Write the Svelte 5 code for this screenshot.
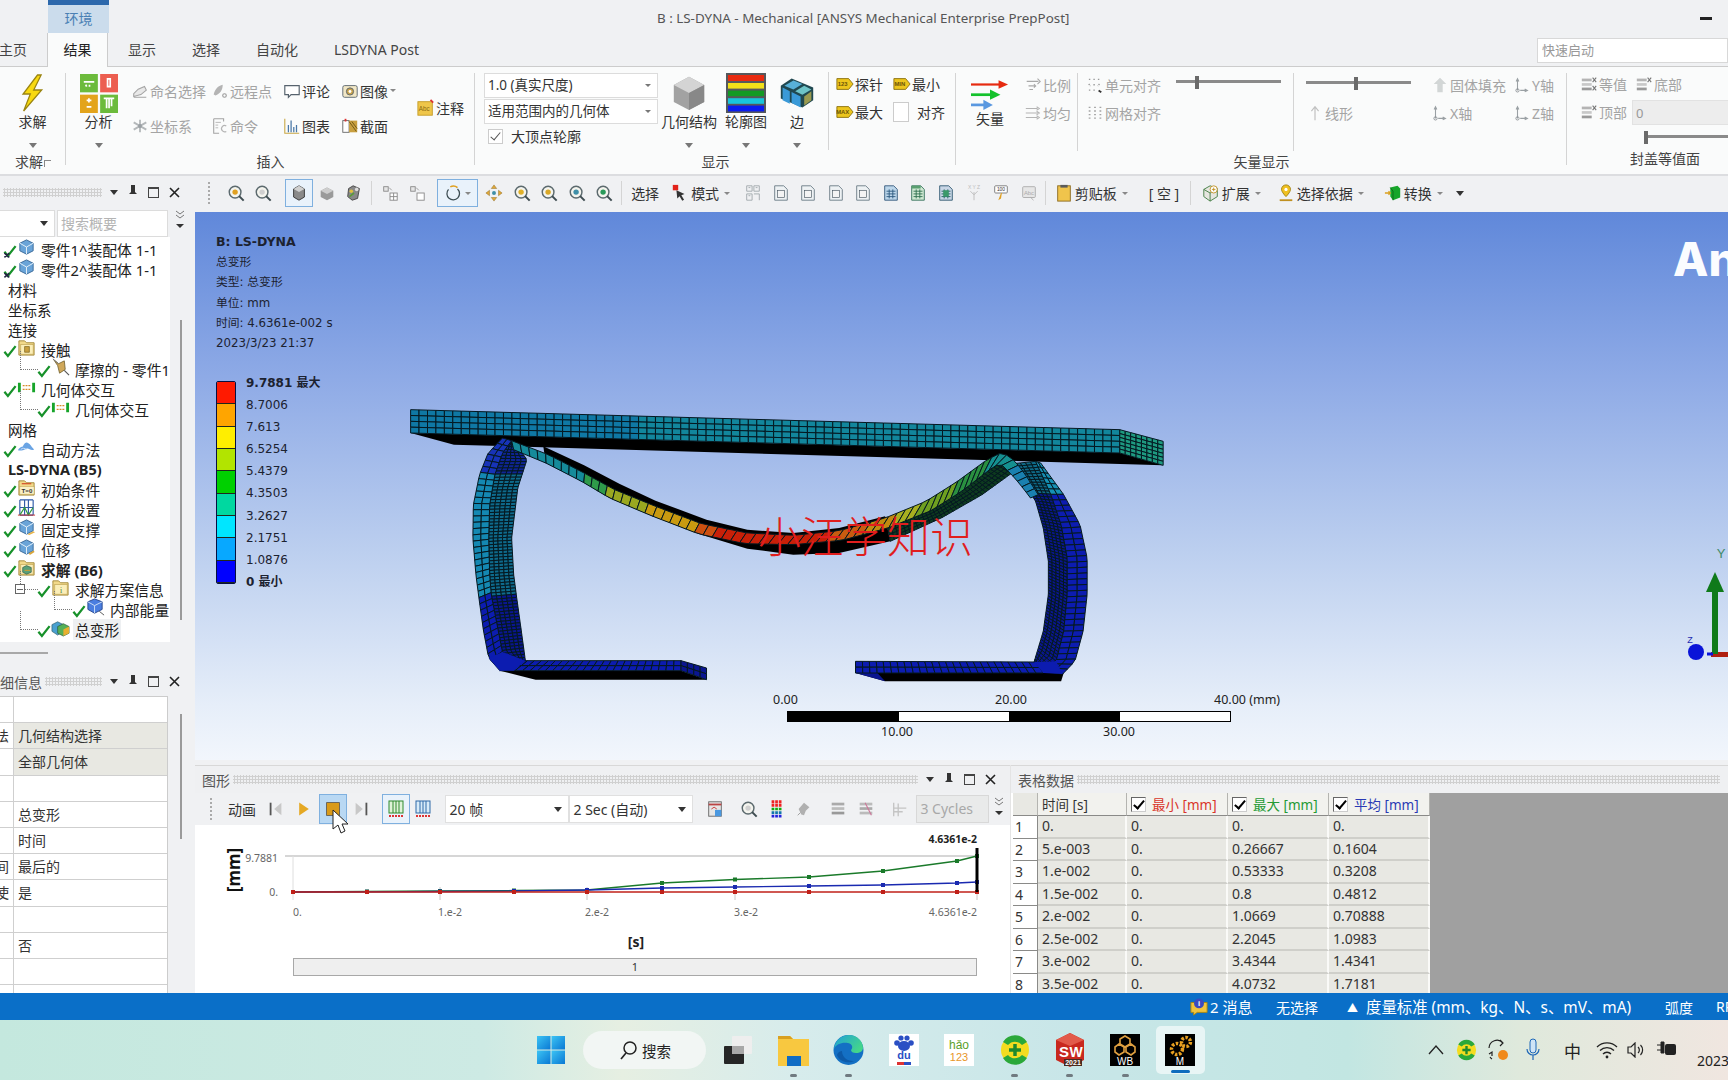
<script>
	const mag = (c) =>
		`<circle cx="9" cy="9" r="6.5" fill="#f4f4ee" stroke="#5c6a6e" stroke-width="1.6"/><circle cx="9" cy="9" r="3" fill="${c}"/><path d="M13.5 13.5l5 5" stroke="#3e4c50" stroke-width="2.2"/>`;
	const sheet = (c) =>
		`<path d="M3 2h10l4 4v12H3z" fill="#eef2f4" stroke="#6a7a84"/><rect x="6" y="7" width="8" height="8" fill="${c}" stroke="#44525c" stroke-width=".7"/>`;
	const folder = (inner) =>
		`<path d="M2 6V3h6l2 2h8v13H2z" fill="#f2d98a" stroke="#a58a3a"/><rect x="4" y="7" width="13" height="10" fill="#fbeeb8" stroke="#b79c4a" stroke-width=".6"/>${inner}`;
	const cubeBlue = `<path d="M10 2l7 3.5v8L10 17l-7-3.5v-8z" fill="#6aa4d8" stroke="#3a6a9a"/><path d="M10 9.5v7.5M3 5.5l7 4 7-4" fill="none" stroke="#e8f2fa"/>`;
	const ax = () =>
		`<path d="M5 16V4M3.5 6L5 3l1.5 3M8 16h8M13 14.5l3 1.5-3 1.5" fill="none" stroke="#9aa0a4" stroke-width="1.2"/><circle cx="5" cy="16" r="1.8" fill="none" stroke="#8a9094"/>`;
	const cap = (t) =>
		`<rect x="2" y="4" width="11" height="3" fill="#b4b4b4"/><rect x="2" y="9" width="11" height="3" fill="#c8c8c8"/><rect x="2" y="14" width="11" height="3" fill="#9a9a9a"/><path d="M14 3l4 5M18 3l-4 5${t ? 'M14 12l4 5M18 12l-4 5' : ''}" stroke="#777" stroke-width="1.2"/>`;
	const tag = (c, t) =>
		`<path d="M1 4h13l5 6-5 6H1z" fill="${c}" stroke="#8a7010"/><text x="7.5" y="12.5" font-size="6.5" text-anchor="middle" font-family="Liberation Sans" fill="#6a5408" font-weight="700">${t}</text>`;

	const icons = {
		bolt: `<path d="M12.5 1L4.5 10.5h4L4.8 19l10-10.5h-4.4L14.5 1z" fill="#f8d910" stroke="#9a8410" stroke-width=".7"/>`,
		analysis: `<rect x="0" y="0" width="9.4" height="9.4" fill="#6cbb3c"/><rect x="10.6" y="0" width="9.4" height="9.4" fill="#ec5e50"/><rect x="0" y="10.6" width="9.4" height="9.4" fill="#e3a41c"/><rect x="10.6" y="10.6" width="9.4" height="9.4" fill="#6cbb3c"/><path d="M2 4h5.5M3 5.5l.5 1M5 5.5v1M14.5 2.5h1.4v4h-1.4zM3.5 13.5h2.5M4.7 12.4v2.2M3.5 16.8h2.5M12.5 12.5h5.5M14 12.5v5M15.3 12.5v5M16.6 12.5v4" stroke="#fff" stroke-width=".9" fill="none"/>`,
		named: `<path d="M3 16v-3l5-5 7-3 2 4-6 5zM3 17h14" fill="#e8e8e8" stroke="#a4a4a4" stroke-width="1.2"/>`,
		remote: `<path d="M3 14C4 8 8 4 13 3c0 6-3 10-8 12z" fill="#b4b4b4"/><circle cx="15" cy="15" r="2" fill="none" stroke="#999" stroke-width="1.2"/>`,
		comment: `<path d="M2 4h16v10H9l-3 3v-3H2z" fill="#fff" stroke="#57636e" stroke-width="1.3"/><path d="M5 9h.01M8 9h.01M11 9h.01" stroke="#57636e"/>`,
		image: `<rect x="2" y="4" width="16" height="13" rx="2" fill="#f1e7c6" stroke="#57636e"/><circle cx="10" cy="10.5" r="4" fill="#c9a24a" stroke="#57636e"/><circle cx="10" cy="10.5" r="1.6" fill="#fff"/>`,
		coord: `<path d="M10 3v14M3 6l14 8M17 6L3 14" stroke="#b4b8ba" stroke-width="2"/><circle cx="10" cy="10" r="2.2" fill="#9aa0a4"/>`,
		command: `<path d="M3 2h11v3M3 2v16h6" fill="none" stroke="#a4a4a4" stroke-width="1.2"/><path d="M5 6h6M5 9h3M5 12h3" stroke="#b4b4b4"/><path d="M17 10a3.5 3.5 0 1 0 0 6" fill="none" stroke="#b4b4b4" stroke-width="1.3"/>`,
		chart: `<path d="M2 2v16h16" fill="none" stroke="#c9a845" stroke-width="1.2"/><path d="M6 17V9M9 17V4M12 17v-6M15 17v-8" stroke="#4a78a8" stroke-width="1.4"/>`,
		section: `<rect x="2" y="4" width="7" height="13" fill="#fff" stroke="#666"/><rect x="9" y="4" width="9" height="13" fill="#c9a040"/><path d="M9 5l8 11M12 5l6 8" stroke="#6a5412"/><path d="M5 2v3" stroke="#d33" stroke-width="2"/>`,
		note: `<rect x="1" y="3" width="16" height="15" fill="#efc64a" stroke="#c49b24"/><text x="8" y="13" font-size="7" text-anchor="middle" fill="#8a6a10" font-family="Liberation Sans">Abc</text><path d="M15 1l3 3" stroke="#d33" stroke-width="2"/>`,
		cube: `<path d="M10 1l8 4.5v9.5l-8 4.5-8-4.5V5.5z" fill="#a2a2a2"/><path d="M10 1l8 4.5-8 4.5-8-4.5z" fill="#d4d4d4"/><path d="M10 10l8-4.5V15l-8 4.5z" fill="#888"/>`,
		contour: `<rect width="20" height="20" fill="#55585c"/><rect x="1" y="1" width="18" height="3" fill="#e82a10"/><rect x="1" y="5" width="18" height="2.8" fill="#f2e01a"/><rect x="1" y="8.8" width="18" height="2.8" fill="#139a25"/><rect x="1" y="12.6" width="18" height="2.8" fill="#18c6dc"/><rect x="1" y="16.3" width="18" height="2.9" fill="#0b1cf0"/>`,
		edges: `<path d="M1 6l6-4 12 5v7l-6 4L1 13z" fill="#204850"/><path d="M2 7l4 2v7l-4-2zM7 9.5l5 2.5v6l-5-2.5z" fill="#3a9ad8"/><path d="M3 6l5-3 5 2-5 3z" fill="#58b0d8"/><path d="M9 9l5-3 4 2-5 3z" fill="#6ec4c8"/><path d="M14 12l4-3v5l-4 3z" fill="#9a9a50"/>`,
		probe: tag('#ecc51c', '123'),
		min: tag('#ecc51c', 'MIN'),
		max: tag('#ecc51c', 'MAX'),
		vector: `<path d="M0 5h15.5" stroke="#e62a10" stroke-width="1.3"/><path d="M14.5 2.5L19.5 5l-5 2.5z" fill="#e62a10"/><path d="M0 11h11" stroke="#14c22c" stroke-width="1.6"/><path d="M10 8l5.5 3-5.500 3z" fill="#14c22c"/><path d="M0 17h7" stroke="#5a98e0" stroke-width="1.6"/><path d="M6.5 14l5 3-5 3z" fill="#5a98e0"/>`,
		scale: `<path d="M3 6h13M15 3l3 3-3 3M5 11h7M11 9l2 2-2 2M6 15h4" fill="none" stroke="#a8a8a8" stroke-width="1.2"/>`,
		uniform: `<path d="M2 5h13M14 3l3 2-3 2M2 10h13M14 8l3 2-3 2M2 15h13M14 13l3 2-3 2" fill="none" stroke="#b4b4b4" stroke-width="1.2"/>`,
		ealign: `<path d="M4 3v2M9 3v2M14 3v2M3 9l2 2M9 9v2M15 9l-2 2M4 15v2M9 15v2" stroke="#9a9a9a" stroke-width="1.6" stroke-dasharray="1.5 1"/><path d="M14 16l3 2" stroke="#333" stroke-width="2"/>`,
		galign: `<path d="M4 3v14M10 3v14M16 3v14" stroke="#a4a4a4" stroke-width="2" stroke-dasharray="1.5 2.5"/>`,
		arrowUp: `<path d="M10 18V3M6 8l4-5 4 5" fill="none" stroke="#c0c0c0" stroke-width="1.3"/>`,
		fill: `<path d="M7 18V9H3l7-7 7 7h-4v9z" fill="#d2d6d6"/>`,
		axis: ax(),
		capEq: cap(1),
		capBot: cap(0),
		capTop: cap(0),
		zb: mag('#e0a020'),
		zg: mag('#d0d0d0'),
		zp: mag('#d9a828'),
		zy: mag('#e0b028'),
		zu: mag('#3f8fa8'),
		ze: mag('#2a9a5a'),
		viewBox: `<path d="M10 2l6 3.5v9L10 18l-6-3.5v-9z" fill="#8a8a8a" stroke="#333"/><path d="M10 2l6 3.5-6 3.5-6-3.5z" fill="#cfcfcf"/>`,
		viewFlat: `<path d="M10 4l7 3.5v7L10 18l-7-3.5v-7z" fill="#9a9a9a"/><path d="M10 4l7 3.5-7 3.5-7-3.5z" fill="#cdcdcd"/>`,
		viewMulti: `<path d="M9 2l7 3-2 11-6 2-5-4 1-9z" fill="#888" stroke="#444"/><circle cx="7" cy="8" r="2" fill="#e0c040"/><circle cx="13" cy="6" r="2" fill="#ddd"/><path d="M5 14l5-4" stroke="#5a9a3a" stroke-width="2"/>`,
		layA: `<rect x="3" y="3" width="5" height="5" fill="#e6e6e6" stroke="#888"/><path d="M9 4l3 3" stroke="#999"/><rect x="10" y="10" width="8" height="8" fill="#fff" stroke="#888"/><path d="M14 10v8M10 14h8" stroke="#888"/>`,
		layB: `<rect x="3" y="3" width="5" height="5" fill="#e6e6e6" stroke="#888"/><path d="M9 4l3 3" stroke="#999"/><rect x="10" y="10" width="8" height="8" fill="#fff" stroke="#888"/>`,
		rotate: `<path d="M5 6a7 7 0 1 0 10-.5" fill="none" stroke="#3c4c52" stroke-width="1.4"/><path d="M15 4a7 7 0 0 0-8-.8" fill="none" stroke="#e0a020" stroke-width="1.8"/>`,
		pan: `<path d="M10 1l3 4H7zM10 19l-3-4h6zM1 10l4-3v6zM19 10l-4 3V7z" fill="#e0a83a" stroke="#8a6a20" stroke-width=".5"/><circle cx="10" cy="10" r="2.2" fill="#3f8fa8"/>`,
		mode: `<rect x="2" y="1" width="6" height="6" fill="#e2231a"/><path d="M6 7l9 4-3.5 1.5 3 5-2 1-3-5L7 16z" fill="#333"/>`,
		grid1: `<path d="M3 2h6v6H3zM11 2h6v6h-6zM3 11h6v7H3zM11 11h6v7" fill="none" stroke="#a0a8ac"/><path d="M5 4h2M13 4h2M5 13h2" stroke="#a0a8ac"/>`,
		doc: sheet('#f4f4f4'),
		docB: `<path d="M3 2h10l4 4v12H3z" fill="#bcd6ea" stroke="#33587a"/><path d="M5 8h10M5 11h10M5 14h10M8 6v10M12 6v10" stroke="#2e5a80"/>`,
		docG: `<path d="M3 2h10l4 4v12H3z" fill="#cfe8d2" stroke="#34705a"/><path d="M5 8h10M5 11h10M5 14h10M8 6v10M12 6v10" stroke="#2f7050"/><path d="M3 2h10v3H3z" fill="#5aa070"/>`,
		docT: `<path d="M3 2h10l4 4v12H3z" fill="#c9d6e6" stroke="#2f5870"/><path d="M5 8h10M5 11h10M5 14h10M8 6v10M12 6v10" stroke="#1f6060"/><rect x="7" y="7" width="6" height="7" fill="#3b9a6a"/>`,
		xyz: `<text x="10" y="6" font-size="5.5" text-anchor="middle" fill="#bbb" font-family="Liberation Sans">X Y Z</text><path d="M10 9v9M6 8l4 4 4-4" stroke="#bbb" fill="none"/>`,
		pin100: `<rect x="3" y="2" width="14" height="8" rx="1" fill="#fff" stroke="#777"/><text x="10" y="8.3" font-size="5.5" text-anchor="middle" fill="#333" font-family="Liberation Sans">100</text><path d="M10 10l-3 8 3-2 1-6" fill="#e0a020"/>`,
		abc: `<rect x="3" y="3" width="14" height="12" rx="1" fill="#e6e6e6" stroke="#aaa"/><text x="10" y="12" font-size="6.5" text-anchor="middle" fill="#aaa" font-family="Liberation Sans">Abc</text><path d="M12 15l3 3" stroke="#aaa"/>`,
		clip: `<rect x="3" y="2" width="14" height="17" fill="#f0c44c" stroke="#8a6a1e"/><rect x="6" y="1" width="8" height="3" fill="#5b5b5b"/>`,
		ext: `<path d="M9 2l8 3v9l-8 5-7-5V6z" fill="#e6e6e0" stroke="#3f7a3f"/><path d="M2 6l7 4 8-5M9 10v9" stroke="#3f7a3f" fill="none"/><circle cx="13" cy="6" r="4" fill="#fff" stroke="#c09020"/><path d="M13 4v4M11 6h4" stroke="#c09020"/>`,
		pinMap: `<path d="M10 1a5 5 0 0 1 5 5c0 3-5 8-5 8s-5-5-5-8a5 5 0 0 1 5-5z" fill="#f0c020" stroke="#a08010"/><circle cx="10" cy="6" r="1.8" fill="#fff"/><path d="M3 18h14" stroke="#c09020" stroke-width="2"/>`,
		conv: `<path d="M7 4l8-2 3 3v10l-8 3-3-4z" fill="#17a52a"/><path d="M7 4l3 4v10" stroke="#0d6a1a" fill="none"/><path d="M1 10h6M5 8l2 2-2 2" stroke="#d9a020" fill="none" stroke-width="1.4"/>`,
		skipB: `<rect x="3" y="3" width="2" height="14" fill="#555"/><path d="M16 3v14L8 10z" fill="#c8c8c8"/>`,
		play: `<path d="M4 2v16l12-8z" fill="#e5a824"/>`,
		stop: `<rect x="2" y="2" width="16" height="16" fill="#d99a1a" stroke="#57534a"/>`,
		skipF: `<path d="M4 3v14l8-7z" fill="#c8c8c8"/><rect x="15" y="3" width="2" height="14" fill="#555"/>`,
		barA: `<rect x="3" y="2" width="14" height="12" fill="#dff3d8" stroke="#2f8a2f"/><path d="M7 2v12M10 2v12M13 2v12" stroke="#2f8a2f"/><path d="M3 17h14" stroke="#d33" stroke-width="2" stroke-dasharray="2 1"/>`,
		barB: `<rect x="3" y="2" width="14" height="12" fill="#d8ebf8" stroke="#2f6aa8"/><path d="M7 2v12M10 2v12M13 2v12" stroke="#2f6aa8"/><path d="M3 17h14" stroke="#d33" stroke-width="2" stroke-dasharray="2 1"/>`,
		movie: `<rect x="3" y="2" width="14" height="16" fill="#e6e6e6" stroke="#666"/><path d="M3 5h14" stroke="#b44" stroke-width="2"/><path d="M6 10l3-2 3 2" stroke="#c33" fill="none"/><rect x="10" y="11" width="7" height="7" fill="#4a98e0"/>`,
		colors: `<path d="M4 2h12" stroke="#e22" stroke-width="3.5" stroke-dasharray="3 1"/><path d="M4 6h12" stroke="#e22" stroke-width="3" stroke-dasharray="3 1"/><path d="M4 10h12" stroke="#1a1" stroke-width="3" stroke-dasharray="3 1"/><path d="M4 14h12" stroke="#17a" stroke-width="3" stroke-dasharray="3 1"/><path d="M4 18h12" stroke="#22d" stroke-width="3" stroke-dasharray="3 1"/>`,
		probeGray: `<path d="M4 10l6-7 6 5-4 4-2 5-3-1z" fill="#b0b0b0"/><path d="M3 17l3-3" stroke="#999"/>`,
		stack1: `<rect x="3" y="3" width="14" height="3" fill="#aaa"/><rect x="3" y="8" width="14" height="3" fill="#bbb"/><rect x="3" y="13" width="14" height="3" fill="#999"/>`,
		stack2: `<rect x="3" y="3" width="14" height="3" fill="#bbb"/><rect x="3" y="8" width="14" height="3" fill="#aaa"/><rect x="3" y="13" width="14" height="3" fill="#bbb"/><path d="M9 3l7 14" stroke="#c79" stroke-width="1.2"/>`,
		fork: `<path d="M3 3v15M3 9h14M3 13h10M8 4v14" stroke="#c4c4c4" stroke-width="1.5" fill="none"/>`,
		part: `${cubeBlue}`,
		fcontact: folder(`<path d="M8 9h5v6h-5z" fill="#c9a040" stroke="#775d18" stroke-width=".7"/>`),
		friction: `<path d="M3 2l5 4 6-3 1 9-6 4-2-8z" fill="#d0a85a" stroke="#6a5a28" stroke-width=".8"/><path d="M14 13l5 5" stroke="#555" stroke-width="1.2"/><path d="M2 1l6 5" stroke="#777"/>`,
		geoi: `<rect x="1" y="5" width="3" height="10" fill="#17a52a"/><rect x="16" y="5" width="3" height="10" fill="#17a52a"/><path d="M6 8h8M6 12h8" stroke="#d88a28" stroke-width="1.5" stroke-dasharray="2 1"/>`,
		meshm: `<path d="M1 13c2-4 4-3 5-4s2-5 5-4 3 3 7 7c-3 2-5-1-7-1s-4 3-10 2z" fill="#6aa4e4"/><path d="M4 12c2-2 4-1 6 0" stroke="#cfe0f6" fill="none"/>`,
		ft0: `<path d="M2 6V3h6l2 2h8v13H2z" fill="#f2d98a" stroke="#a58a3a"/><rect x="3" y="9" width="15" height="8" fill="#fbf1c8" stroke="#b79c4a" stroke-width=".5"/><path d="M5 6h10" stroke="#d4502a" stroke-width="1.3"/><text x="10.5" y="15.5" text-anchor="middle" font-size="6.5" font-family="Liberation Sans" font-weight="700" fill="#333">T=0</text>`,
		settings: `<path d="M3 2h14M3 18h14M3 2v16M8 2v16M12 2v16M17 2v16M3 10h14" stroke="#2f5aa8" stroke-width="1.2" fill="none"/><path d="M3 18l5-8 4 8 5-8" stroke="#2f9a3a" fill="none" stroke-width="1.2"/><path d="M1 18h18" stroke="#c33"/>`,
		fixed: `${cubeBlue}<path d="M11 17l6-3 2 1-6 3z" fill="#e8b44a"/>`,
		disp: `${cubeBlue}<path d="M13 17l5-3" stroke="#d9a53a" stroke-width="2"/>`,
		fsol: folder(`<path d="M6 10l4-2 5 2v5l-5 2-4-2z" fill="#5aa078" stroke="#2f5a48" stroke-width=".7"/><path d="M8 13h6" stroke="#d9a030"/>`),
		finfo: folder(`<text x="10.5" y="15.5" text-anchor="middle" font-size="8" font-family="Liberation Serif" fill="#3f7a3f">i</text>`),
		energy: `<path d="M9 1l8 3v8l-8 4-7-4V4z" fill="#4a7ee0" stroke="#2a4a90"/><path d="M2 4l7 4 8-4M9 8v8" stroke="#cfe0f6" fill="none"/><path d="M14 14l5 4" stroke="#555"/>`,
		total: `<path d="M1 7l6-3 6 3v7l-6 4-6-4z" fill="#4aa0d0" stroke="#2a5a6a" stroke-width=".7"/><path d="M7 9l6-3 6 3v7l-6 3-6-3z" fill="#55b058" stroke="#2a5a3a" stroke-width=".7"/><path d="M13 12l6-3v7l-6 3z" fill="#e8b030"/>`,
		msg: `<path d="M1 5h18v11H8l-4 3v-3H1z" fill="#efc33c" stroke="#a58410"/><circle cx="10" cy="6" r="5.5" fill="#3a4ac0"/><text x="10" y="9" text-anchor="middle" font-size="8.5" fill="#fff" font-weight="700" font-family="Liberation Sans">i</text>`
	};

	const ribbonInsert = [
		['named', '命名选择', 'off'], ['remote', '远程点', 'off'], ['comment', '评论', ''], ['image', '图像', 'caret'],
		['coord', '坐标系', 'off'], ['command', '命令', 'off'], ['chart', '图表', ''], ['section', '截面', '']
	];
	const selIcons = ['grid1', 'doc', 'doc', 'doc', 'doc', 'docB', 'docG', 'docT', 'xyz', 'pin100', 'abc'];

	const tree = [
		{ l: 1, i: 'part', t: '零件1^装配体 1-1', x: 1 },
		{ l: 1, i: 'part', t: '零件2^装配体 1-1', x: 1 },
		{ l: 0, t: '材料' }, { l: 0, t: '坐标系' }, { l: 0, t: '连接' },
		{ l: 1, i: 'fcontact', t: '接触' },
		{ l: 2, i: 'friction', t: '摩擦的 - 零件1' },
		{ l: 1, i: 'geoi', t: '几何体交互' },
		{ l: 2, i: 'geoi', t: '几何体交互' },
		{ l: 0, t: '网格' },
		{ l: 1, i: 'meshm', t: '自动方法' },
		{ l: 0, t: 'LS-DYNA (B5)', b: 1 },
		{ l: 1, i: 'ft0', t: '初始条件' },
		{ l: 1, i: 'settings', t: '分析设置' },
		{ l: 1, i: 'fixed', t: '固定支撑' },
		{ l: 1, i: 'disp', t: '位移' },
		{ l: 1, i: 'fsol', t: '求解 (B6)', b: 1 },
		{ l: 2, i: 'finfo', t: '求解方案信息', m: 1 },
		{ l: 3, i: 'energy', t: '内部能量' },
		{ l: 2, i: 'total', t: '总变形', s: 1 }
	];

	const details = [
		['', ''], ['法', '几何结构选择', 1], ['', '全部几何体', 1], ['', ''], ['', '总变形'], ['', '时间'],
		['间', '最后的'], ['使', '是'], ['', ''], ['', '否'], ['', ''], ['', '']
	];

	const legendColors = ['#ff1a00', '#ffa500', '#ffee00', '#b2e400', '#00d000', '#00d8a0', '#00e6ff', '#08a8ff', '#0000ff'];
	const legendVals = ['8.7006', '7.613', '6.5254', '5.4379', '4.3503', '3.2627', '2.1751', '1.0876'];

	const tableRows = [
		['0.', '0.', '0.', '0.'], ['5.e-003', '0.', '0.26667', '0.1604'], ['1.e-002', '0.', '0.53333', '0.3208'],
		['1.5e-002', '0.', '0.8', '0.4812'], ['2.e-002', '0.', '1.0669', '0.70888'], ['2.5e-002', '0.', '2.2045', '1.0983'],
		['3.e-002', '0.', '3.4344', '1.4341'], ['3.5e-002', '0.', '4.0732', '1.7181']
	];

	// mesh, in the 1568x960 coordinates of the canvas below
	function resample(pts, n) {
		const len = [0];
		for (let i = 1; i < pts.length; i++) len.push(len[i - 1] + Math.hypot(pts[i][0] - pts[i - 1][0], pts[i][1] - pts[i - 1][1]));
		const out = [];
		let k = 0;
		for (let i = 0; i <= n; i++) {
			const d = (len[len.length - 1] * i) / n;
			while (k < pts.length - 2 && len[k + 1] < d) k++;
			const f = (d - len[k]) / (len[k + 1] - len[k] || 1);
			out.push([pts[k][0] + (pts[k + 1][0] - pts[k][0]) * f, pts[k][1] + (pts[k + 1][1] - pts[k][1]) * f]);
		}
		return out;
	}
	const mix = (a, b, f) => [a[0] + (b[0] - a[0]) * f, a[1] + (b[1] - a[1]) * f];
	function band(a, b, n, rows, color) {
		const A = resample(a, n), B = resample(b, n), cells = [];
		for (let i = 0; i < n; i++) {
			for (let r = 0; r < rows; r++) {
				const p = [mix(A[i], B[i], r / rows), mix(A[i + 1], B[i + 1], r / rows), mix(A[i + 1], B[i + 1], (r + 1) / rows), mix(A[i], B[i], (r + 1) / rows)];
				const cx = (p[0][0] + p[2][0]) / 2, cy = (p[0][1] + p[2][1]) / 2;
				cells.push({ d: 'M' + p.map((q) => q[0].toFixed(1) + ' ' + q[1].toFixed(1)).join('L') + 'Z', f: color(cx, cy) });
			}
		}
		return cells;
	}
	const ringL = (x, y) => (y < 290 ? '#1733b8' : y < 650 ? '#1488b2' : '#0c1cb0');
	const ringLd = (x, y) => (y < 290 ? '#0f2496' : y < 650 ? '#0e6a8c' : '#0a1590');
	const ringR = (x, y) => (y < 350 ? '#1590b4' : '#0c1cb0');
	const ringRd = (x, y) => (y < 350 ? '#0f6a88' : '#0a1590');
	function spring(x) {
		if (x < 400) return '#158a9a';
		if (x < 440) return '#2f9a4a';
		if (x < 520) return '#9aa820';
		if (x < 620) return '#c99a10';
		if (x < 660) return '#cc5010';
		if (x < 880) return '#c82008';
		if (x < 960) return '#c85c10';
		if (x < 1010) return '#c08a10';
		if (x < 1060) return '#a8b020';
		if (x < 1130) return '#6fa020';
		if (x < 1190) return '#2a9040';
		if (x < 1240) return '#159090';
		return '#1a80b0';
	}
	const springTop = [[258,188],[330,230],[400,285],[460,335],[540,385],[630,437],[720,465],[810,472],[900,458],[990,420],[1070,370],[1130,312],[1190,245],[1220,222],[1245,250],[1265,290],[1290,350]];
	const springLow = [[262,215],[325,255],[395,310],[450,360],[530,412],[625,468],[715,497],[810,500],[905,487],[995,450],[1080,398],[1140,340],[1195,275],[1215,255],[1238,290],[1255,320],[1275,360]];

	const leftO = [[240,180],[212,225],[195,290],[183,380],[182,480],[188,590],[193,650],[203,760],[213,840],[235,878]];
	const leftS = [[258,188],[240,225],[225,290],[215,380],[213,480],[215,590],[218,650],[232,760],[240,822],[262,848]];
	const leftI = [[262,190],[288,245],[270,330],[258,480],[262,590],[268,660],[278,770],[285,848],[285,848],[285,848]];
	const rightO = [[1295,255],[1340,350],[1372,440],[1386,540],[1386,650],[1378,760],[1362,850],[1338,888]];
	const rightM = [[1285,250],[1315,350],[1335,440],[1347,540],[1347,650],[1340,760],[1325,850],[1290,880]];
	const rightI = [[1235,258],[1265,320],[1285,370],[1300,450],[1310,550],[1310,650],[1300,760],[1282,852]];

	const meshCells = [
		...band([[60,95],[1450,155]], [[60,165],[1450,225]], 84, 4, (x) => (x < 500 ? '#0f78a4' : '#12869c')),
		...band([[1450,155],[1535,190]], [[1450,225],[1535,262]], 8, 6, () => '#1e9a80'),
		...band(leftS, leftI, 70, 5, ringLd),
		...band(leftO, leftS, 38, 2, ringL),
		...band([[262,848],[590,848]], [[235,878],[590,878]], 24, 2, () => '#0c1cb0'),
		...band([[590,848],[640,870]], [[590,878],[640,905]], 4, 2, () => '#0a1590'),
		...band(springLow.slice(9, 14), [[1000,490],[1100,420],[1180,350],[1225,300],[1245,278]], 34, 4, () => '#0d3a1e'),
		...band(rightI, rightM, 70, 5, ringRd),
		...band(rightM, rightO, 38, 2, ringR),
		...band([[932,850],[1285,852]], [[932,885],[1300,885]], 26, 2, () => '#0c1cb0'),
		...band(springTop, springLow, 66, 1, spring)
	];
	const shadow = '320,205 400,262 470,318 540,368 640,425 720,455 810,465 900,450 990,415 1000,490 900,525 810,530 720,512 625,468 530,412 450,360 395,310 325,255';

	// chart, offset from the panel's top left corner
	const gx = [293, 367, 440, 514, 587, 662, 735, 809, 883, 957, 977].map((x) => x - 195);
	const line = (ys) => ys.map((y, i) => gx[i] + ',' + (y - 827)).join(' ');
	const series = [
		{ c: '#1a7a2a', ys: [894, 893.5, 893, 892.5, 892, 885, 881.5, 879, 873, 863, 858] },
		{ c: '#1a2ab0', ys: [894, 893.8, 893.5, 893, 892, 890, 889, 888, 887, 885, 884] },
		{ c: '#c02018', ys: [894, 894, 894, 894, 894, 894, 894, 894, 894, 894, 894] }
	];
	const xTicks = [[98, '0.', 'start'], [255, '1.e-2', 'middle'], [402, '2.e-2', 'middle'], [551, '3.e-2', 'middle'], [782, '4.6361e-2', 'end']];
</script>

{#snippet ic(name, w = 18, h = w)}
	<svg class="ic" width={w} height={h} viewBox="0 0 20 20" preserveAspectRatio="none">{@html icons[name]}</svg>
{/snippet}

{#snippet big(name, label, w, h, cls = '')}
	<div class="big {cls}">
		<div class="big-ic">{@render ic(name, w, h)}</div>
		<span>{label}</span>
		<i class="caret"></i>
	</div>
{/snippet}

{#snippet small(name, label, cls = '')}
	<div class="small {cls}">
		{@render ic(name, 18)}<span>{label}</span>
		{#if cls === 'caret-after'}<i class="caret tiny"></i>{/if}
	</div>
{/snippet}

{#snippet paneBtns()}
	<div class="pane-btns">
		<i class="caret dark"></i>
		<svg width="10" height="16" viewBox="0 0 10 16"><path d="M3 1h4v7l2 2H1l2-2zM5 10v6" fill="#333"/></svg>
		<span class="box"></span>
		<svg width="11" height="11" viewBox="0 0 11 11"><path d="M1 1l9 9M10 1l-9 9" stroke="#222" stroke-width="1.6"/></svg>
	</div>
{/snippet}

{#snippet chev()}
	<svg width="10" height="20" viewBox="0 0 10 20"><path d="M1 1l4 3 4-3M1 5l4 3 4-3" fill="none" stroke="#777"/><path d="M1 14h8l-4 4z" fill="#333"/></svg>
{/snippet}

<div class="app">
	<header class="titlebar">
		<div class="ctx"><span>环境</span></div>
		<div class="title">B : LS-DYNA - Mechanical [ANSYS Mechanical Enterprise PrepPost]</div>
		<div class="minimize"></div>
	</header>

	<nav class="tabs">
		<span class="tab cut">主页</span>
		<span class="tab active">结果</span>
		<span class="tab t1">显示</span>
		<span class="tab t1">选择</span>
		<span class="tab t2">自动化</span>
		<span class="tab t3">LSDYNA Post</span>
		<div class="quick">快速启动</div>
	</nav>

	<section class="ribbon">
		<div class="rgroup g-solve">
			<div class="rbody">{@render big('bolt', '求解', 36, 40)}</div>
			<div class="rlabel">求解<i class="launch"></i></div>
		</div>

		<div class="rgroup g-insert">
			<div class="rbody">
				{@render big('analysis', '分析', 38, 39)}
				<div class="insert-grid">
					{#each ribbonInsert as [n, t, c]}
						{@render small(n, t, c === 'off' ? 'off' : c === 'caret' ? 'caret-after' : '')}
					{/each}
				</div>
				<div class="note">{@render small('note', '注释')}</div>
			</div>
			<div class="rlabel">插入</div>
		</div>

		<div class="rgroup g-show">
			<div class="rbody">
				<div class="combos">
					<div class="combo">1.0 (真实尺度)<i class="caret"></i></div>
					<div class="combo">适用范围内的几何体<i class="caret"></i></div>
					<div class="check-row"><span class="cb on"></span>大顶点轮廓</div>
				</div>
				<div class="b56">{@render big('cube', '几何结构', 38, 36)}</div>
				<div class="b56">{@render big('contour', '轮廓图', 40, 40)}</div>
				<div class="b46">{@render big('edges', '边', 36, 36)}</div>
				<div class="probe-grid">
					{@render small('probe', '探针')}
					{@render small('min', '最小')}
					{@render small('max', '最大')}
					<div class="small"><span class="cb"></span><span class="align-t">对齐</span></div>
				</div>
			</div>
			<div class="rlabel">显示</div>
		</div>

		<div class="rgroup g-vector">
			<div class="rbody">
				<div class="vec-big">{@render big('vector', '矢量', 38, 34, 'no-caret')}</div>
				<div class="two-rows sub w-scale">
					{@render small('scale', '比例', 'off')}
					{@render small('uniform', '均匀', 'off')}
				</div>
				<div class="two-rows sub w-align">
					<div class="row-slide">
						{@render small('ealign', '单元对齐', 'off')}
						<div class="slider s1"><i></i></div>
					</div>
					{@render small('galign', '网格对齐', 'off')}
				</div>
				<div class="two-rows w-line">
					<div class="slider s2"><i></i></div>
					{@render small('arrowUp', '线形', 'off')}
				</div>
				<div class="vec-axes">
					{@render small('fill', '固体填充', 'off')}
					{@render small('axis', 'Y轴', 'off')}
					{@render small('axis', 'X轴', 'off')}
					{@render small('axis', 'Z轴', 'off')}
				</div>
			</div>
			<div class="rlabel">矢量显示</div>
		</div>

		<div class="rgroup g-cap">
			<div class="rbody cap-body">
				<div class="cap-row">
					{@render small('capEq', '等值', 'off')}
					{@render small('capBot', '底部', 'off')}
				</div>
				<div class="cap-row">
					{@render small('capTop', '顶部', 'off')}
					<div class="cap-input">0</div>
				</div>
				<div class="slider s3"><i></i></div>
			</div>
			<div class="rlabel">封盖等值面</div>
		</div>
	</section>

	<div class="toolrow">
		<div class="pane-head top">
			<div class="dots"></div>
			{@render paneBtns()}
		</div>
		<div class="toolbar">
			<span class="grip"></span>
			<span class="tb ml7">{@render ic('zb')}</span>
			<span class="tb">{@render ic('zg')}</span>
			<span class="tb boxed ml8">{@render ic('viewBox')}</span>
			<span class="tb">{@render ic('viewFlat')}</span>
			<span class="tb">{@render ic('viewMulti')}</span>
			<span class="vsep"></span>
			<span class="tb">{@render ic('layA')}</span>
			<span class="tb">{@render ic('layB')}</span>
			<span class="tb boxed wide ml6">{@render ic('rotate')}<i class="caret tiny"></i></span>
			<span class="tb ml2">{@render ic('pan')}</span>
			<span class="tb">{@render ic('zy')}</span>
			<span class="tb">{@render ic('zp')}</span>
			<span class="tb">{@render ic('zu')}</span>
			<span class="tb">{@render ic('ze')}</span>
			<span class="vsep thin"></span>
			<span class="tb-t ml7 w30">选择</span>
			<span class="tb-t ml10 w60">{@render ic('mode')}模式<i class="caret tiny"></i></span>
			<span class="sel-icons ml8">
				{#each selIcons as n}
					<span class="tb">{@render ic(n)}</span>
				{/each}
			</span>
			<span class="vsep thin"></span>
			<span class="tb-t w75 ml6">{@render ic('clip')}剪贴板<i class="caret tiny"></i></span>
			<span class="tb-t empty">[ 空 ]</span>
			<span class="vsep thin ml6"></span>
			<span class="tb-t ml8 w62">{@render ic('ext')}扩展<i class="caret tiny"></i></span>
			<span class="tb-t ml13 w93">{@render ic('pinMap')}选择依据<i class="caret tiny"></i></span>
			<span class="tb-t ml14 w60">{@render ic('conv')}转换<i class="caret tiny"></i></span>
			<i class="caret dark ml12"></i>
		</div>
	</div>

	<main class="main">
		<aside class="left">
			<div class="searchrow">
				<div class="fake-combo"><i class="caret dark"></i></div>
				<div class="search">搜索概要</div>
				<div class="chev">{@render chev()}</div>
			</div>
			<div class="tree-wrap">
				<div class="tree">
					{#each tree as r}
						<div class="node l{r.l}" class:bold={r.b}>
							{#if r.l > 1}<i class="twig"></i>{/if}
							{#if r.m}<i class="minus"></i>{/if}
							{#if r.l > 0}
								<svg class="tick" width="14" height="14" viewBox="0 0 20 20">
									<path d="M2 11l5 6 11-14" fill="none" stroke="#17912a" stroke-width="3.2"/>
									{#if r.x}<path d="M2 13l7 6M9 13l-7 6" stroke="#224" stroke-width="2.2"/>{/if}
								</svg>
								<span class="node-ic">{@render ic(r.i, 19)}</span>
							{/if}
							<span class="node-t" class:sel={r.s}>{r.t}</span>
						</div>
					{/each}
				</div>
				<div class="vscroll tree-scroll"></div>
			</div>
			<div class="hscroll"></div>

			<div class="pane-head details-head">
				<span class="head-t">细信息</span>
				<div class="dots"></div>
				{@render paneBtns()}
			</div>
			<div class="details-wrap">
				<div class="details">
					{#each details as [a, b, fill]}
						<div class="d-row">
							<span class="d-k">{a}</span>
							<span class="d-v" class:fill>{b}</span>
						</div>
					{/each}
				</div>
				<div class="vscroll details-scroll"></div>
			</div>
		</aside>

		<div class="work">
			<div class="viewport">
				<div class="annot">
					<b>B: LS-DYNA</b>
					<span>总变形</span>
					<span>类型: 总变形</span>
					<span>单位: mm</span>
					<span>时间: 4.6361e-002 s</span>
					<span>2023/3/23 21:37</span>
				</div>

				<div class="legend">
					<div class="legend-bar">
						{#each legendColors as c}
							<i style="background:{c}"></i>
						{/each}
					</div>
					<div class="legend-vals">
						<b>9.7881 最大</b>
						{#each legendVals as v}<span>{v}</span>{/each}
						<b>0 最小</b>
					</div>
				</div>

				<svg class="mesh" width="800" height="320" viewBox="0 0 1568 960" preserveAspectRatio="none">
					<polygon points="60,165 145,200 1535,262 1450,225" fill="#000" />
					<polygon points="235,878 305,905 640,905 590,878" fill="#000" />
					<polygon points="932,885 990,910 1335,910 1340,885" fill="#000" />
					<polygon points={shadow} fill="#000" />
					<polygon points="932,850 932,885 990,910 960,860" fill="#0a1590" />
					{#each meshCells as c}
						<path d={c.d} fill={c.f} stroke="#041820" stroke-width="1" vector-effect="non-scaling-stroke" />
					{/each}
					<polygon points="213,840 235,878 262,878 285,848 240,822" fill="#0c1cb0" />
					<polygon points="1282,852 1325,850 1338,888 1300,885" fill="#0c1cb0" />
				</svg>

				<div class="watermark">小汪学知识</div>

				<div class="logo">An</div>

				<svg class="triad" width="60" height="130" viewBox="0 0 60 130">
					<text x="47" y="18" font-size="13" fill="#3f8a68" font-family="Liberation Sans" text-anchor="middle">Y</text>
					<path d="M17 112h4" stroke="#1a2ab0" stroke-width="4" />
					<rect x="37" y="112" width="23" height="5" fill="#b02010" />
					<rect x="38" y="50" width="6" height="64" fill="#0f7a1a" />
					<polygon points="41,32 32,52 50,52" fill="#0f7a1a" />
					<circle cx="22" cy="112" r="8" fill="#0a14d8" />
					<path d="M33 114h6" stroke="#0a14d8" stroke-width="3" />
					<text x="16" y="103" font-size="9" fill="#1a2ab0" font-family="Liberation Sans" text-anchor="middle">Z</text>
				</svg>

				<div class="scale">
					<div class="scale-top"><span>0.00</span><span>20.00</span><span>40.00 (mm)</span></div>
					<div class="scale-bar"><i></i><i></i><i></i><i></i></div>
					<div class="scale-low"><span>10.00</span><span>30.00</span></div>
				</div>
			</div>

			<div class="lower">
				<section class="graph">
					<div class="pane-head graph-head">
						<span class="head-t">图形</span>
						<div class="dots"></div>
						{@render paneBtns()}
					</div>
					<div class="anim-bar">
						<span class="grip"></span>
						<span class="anim-t">动画</span>
						<span class="tb small-tb">{@render ic('skipB')}</span>
						<span class="tb small-tb m-play">{@render ic('play', 16)}</span>
						<span class="tb boxed stop-b">{@render ic('stop', 16)}</span>
						<span class="tb small-tb m-skip">{@render ic('skipF')}</span>
						<span class="tb boxed bar-b">{@render ic('barA', 20)}</span>
						<span class="tb small-tb m-bar">{@render ic('barB', 20)}</span>
						<div class="a-combo c20">20 帧<i class="caret dark"></i></div>
						<div class="a-combo c2">2 Sec (自动)<i class="caret dark"></i></div>
						<span class="tb m1">{@render ic('movie')}</span>
						<span class="tb m2">{@render ic('zg')}</span>
						<span class="tb">{@render ic('colors')}</span>
						<span class="tb">{@render ic('probeGray')}</span>
						<span class="tb m2">{@render ic('stack1')}</span>
						<span class="tb">{@render ic('stack2')}</span>
						<span class="tb m4">{@render ic('fork')}</span>
						<div class="cycles">3 Cycles</div>
						<div class="chev2">{@render chev()}</div>
					</div>
					<svg class="cursor" width="16" height="26" viewBox="0 0 16 26">
						<path d="M1 1v19l5-4 3 8 4-2-3-7h6z" fill="#fff" stroke="#222" />
					</svg>
					<div class="chart">
						<svg width="815" height="166" viewBox="0 0 815 166">
							<text transform="translate(45,45) rotate(-90)" text-anchor="middle" font-size="17" font-weight="700" class="cfont" fill="#111">[mm]</text>
							<text x="83" y="37" text-anchor="end" font-size="10.5" fill="#666" class="cfont">9.7881</text>
							<text x="83" y="71" text-anchor="end" font-size="10.5" fill="#666" class="cfont">0.</text>
							<line x1="90" y1="31" x2="782" y2="31" stroke="#c8c8c8" stroke-width="1.5" />
							<line x1="98" y1="31" x2="98" y2="75" stroke="#dedede" />
							{#each [245, 392, 540, 782] as x}
								<line x1={x} y1="62" x2={x} y2="75" stroke="#c8c8c8" />
							{/each}
							{#each series as s}
								<polyline points={line(s.ys)} fill="none" stroke={s.c} stroke-width="1.3" />
								{#each s.ys as y, i}
									<rect x={gx[i] - 2} y={y - 829} width="4" height="4" fill={s.c} />
								{/each}
							{/each}
							<line x1="782" y1="23" x2="782" y2="67" stroke="#000" stroke-width="3" />
							<text x="782" y="18" text-anchor="end" font-size="10.5" font-weight="700" fill="#222" class="cfont">4.6361e-2</text>
							{#each xTicks as [x, t, a]}
								<text {x} y="91" text-anchor={a} font-size="10.5" fill="#666" class="cfont">{t}</text>
							{/each}
							<text x="441" y="122" text-anchor="middle" font-size="14" font-weight="700" fill="#222" class="cfont">[s]</text>
						</svg>
						<div class="time-slider">1</div>
					</div>
				</section>

				<section class="tabular">
					<div class="pane-head table-head">
						<span class="head-t">表格数据</span>
						<div class="dots"></div>
					</div>
					<div class="table-area">
						<div class="grid">
							<div class="th corner"></div>
							<div class="th">时间 [s]</div>
							<div class="th"><span class="hcb"></span><span class="red">最小 [mm]</span></div>
							<div class="th"><span class="hcb"></span><span class="green">最大 [mm]</span></div>
							<div class="th"><span class="hcb"></span><span class="blue">平均 [mm]</span></div>
							{#each tableRows as row, i}
								<div class="rn">{i + 1}</div>
								{#each row as v}<div class="td">{v}</div>{/each}
							{/each}
						</div>
					</div>
				</section>
			</div>
		</div>
	</main>

	<footer class="status">
		<span class="st-ic">{@render ic('msg', 18)}</span>
		<span class="st-msg">2 消息</span>
		<span class="st-sel">无选择</span>
		<span class="st-up">▲</span>
		<span class="st-unit">度量标准 (mm、kg、N、s、mV、mA)</span>
		<span class="st-rad">弧度</span>
		<span class="st-rl">RPM</span>
	</footer>

	<div class="taskbar">
		<svg class="win" width="30" height="30" viewBox="0 0 30 30">
			<defs>
				<linearGradient id="wg" x1="0" y1="0" x2="1" y2="1"><stop offset="0" stop-color="#3cc4f4" /><stop offset="1" stop-color="#0a78d4" /></linearGradient>
			</defs>
			<rect x="1" y="1" width="13.5" height="13.5" fill="url(#wg)" />
			<rect x="15.5" y="1" width="13.5" height="13.5" fill="url(#wg)" />
			<rect x="1" y="15.5" width="13.5" height="13.5" fill="url(#wg)" />
			<rect x="15.5" y="15.5" width="13.5" height="13.5" fill="url(#wg)" />
		</svg>
		<div class="pill">
			<svg width="20" height="20" viewBox="0 0 20 20"><circle cx="12" cy="8" r="6" fill="none" stroke="#222" stroke-width="1.5" /><path d="M8 13l-5 6" stroke="#222" stroke-width="1.7" /></svg>
			<span>搜索</span>
		</div>
		<div class="slot">
			<svg width="30" height="30" viewBox="0 0 30 30"><rect x="1" y="11" width="20" height="18" rx="1" fill="#262626" /><rect x="9" y="1" width="20" height="18" rx="1" fill="#eeeeee" /><rect x="9" y="11" width="12" height="8" fill="#a8a8a8" /></svg>
		</div>
		<div class="slot dot">
			<svg width="31" height="32" viewBox="0 0 31 32"><path d="M0 2h12l3 3h16v27H0z" fill="#f8c840" /><path d="M0 2h12l3 3H0z" fill="#d9a020" /><rect x="9" y="22" width="14" height="10" fill="#0f6cc4" /></svg>
		</div>
		<div class="slot dot">
			<svg width="31" height="32" viewBox="0 0 31 32">
				<defs>
					<linearGradient id="eg" x1="0" y1="0" x2="1" y2="0.6"><stop offset="0" stop-color="#1fa0d8" /><stop offset="1" stop-color="#44d68a" /></linearGradient>
				</defs>
				<circle cx="15.5" cy="16" r="15" fill="#1470c4" />
				<path d="M1 15C2 6 9 1 16 1c8 0 14 6 14 13 0 3-3 5-7 5-3 0-5-1-5-3 2-2 2-6-3-7C9 8 3 10 1 15z" fill="url(#eg)" />
				<path d="M9 17c0 6 5 10 11 10 1 0 2 0 3-1-6 4-16 3-19-5 1-3 3-4 5-4z" fill="#0d5aa8" />
			</svg>
		</div>
		<div class="slot">
			<svg width="30" height="32" viewBox="0 0 30 32">
				<rect width="30" height="32" fill="#fff" />
				<ellipse cx="15" cy="12" rx="6" ry="5" fill="#2a4fc4" /><circle cx="8" cy="9" r="2.8" fill="#2a4fc4" /><circle cx="22" cy="9" r="2.8" fill="#2a4fc4" /><circle cx="12" cy="4" r="2.6" fill="#2a4fc4" /><circle cx="18" cy="4" r="2.6" fill="#2a4fc4" />
				<text x="15" y="25" text-anchor="middle" font-size="11" fill="#2a4fc4" font-family="Liberation Sans" font-weight="700">du</text>
				<rect x="8" y="28" width="7" height="3" fill="#d33" /><rect x="15" y="28" width="7" height="3" fill="#2a4fc4" />
			</svg>
		</div>
		<div class="slot">
			<svg width="30" height="32" viewBox="0 0 30 32">
				<rect width="30" height="32" fill="#fff" />
				<text x="15" y="15" text-anchor="middle" font-size="12" fill="#5aa02c" font-family="Liberation Sans">hǎo</text>
				<text x="15" y="27" text-anchor="middle" font-size="11" fill="#e8962a" font-family="Liberation Sans">123</text>
			</svg>
		</div>
		<div class="slot dot">
			<svg width="30" height="32" viewBox="0 0 30 32">
				<circle cx="15" cy="16" r="14" fill="#f4dc20" />
				<path d="M3 8a14 14 0 0 1 24 0l-5 3a9 9 0 0 0-14 0zM27 24a14 14 0 0 1-24 0l5-3a9 9 0 0 0 14 0z" fill="#2aa83a" />
				<path d="M15 10v12M9 16h12" stroke="#1f8a2e" stroke-width="3.5" />
			</svg>
		</div>
		<div class="slot dot">
			<svg width="30" height="34" viewBox="0 0 30 34">
				<path d="M15 0l14 7v20l-14 7-14-7V7z" fill="#c8281e" />
				<path d="M15 0l14 7-14 6L1 7z" fill="#e25a4a" />
				<text x="9" y="24" text-anchor="middle" font-size="15" font-weight="700" fill="#fff" font-family="Liberation Sans">S</text>
				<text x="21" y="24" text-anchor="middle" font-size="14" font-weight="700" fill="#fff" font-family="Liberation Sans">W</text>
				<rect x="9" y="26" width="18" height="7" fill="#4a2a20" />
				<text x="18" y="32" text-anchor="middle" font-size="7" font-weight="700" fill="#fff" font-family="Liberation Sans">2021</text>
			</svg>
		</div>
		<div class="slot dot">
			<svg width="30" height="32" viewBox="0 0 30 32">
				<rect width="30" height="32" fill="#000" />
				<path d="M15 2l5 3v5l-5 3-5-3V5zM9 10l5 3v5l-5 3-4-3v-5zM21 10l4 3v5l-4 3-5-3v-5z" fill="none" stroke="#e0a040" stroke-width="1.6" />
				<text x="15" y="31" text-anchor="middle" font-size="10" fill="#fff" font-family="Liberation Sans">WB</text>
			</svg>
		</div>
		<div class="slot active-app">
			<svg width="30" height="32" viewBox="0 0 30 32">
				<rect width="30" height="32" fill="#000" />
				<circle cx="21" cy="8" r="4.5" fill="none" stroke="#e8a020" stroke-width="3.5" stroke-dasharray="2.5 1.5" />
				<circle cx="12" cy="15" r="5.5" fill="none" stroke="#e8a020" stroke-width="3.5" stroke-dasharray="2.5 1.5" />
				<text x="15" y="31" text-anchor="middle" font-size="10" fill="#fff" font-family="Liberation Sans">M</text>
			</svg>
		</div>
		<div class="tray">
			<svg width="16" height="10" viewBox="0 0 16 10"><path d="M1 9l7-8 7 8" fill="none" stroke="#222" stroke-width="1.3" /></svg>
			<svg width="21" height="22" viewBox="0 0 30 32"><circle cx="15" cy="16" r="14" fill="#f4dc20" /><path d="M3 8a14 14 0 0 1 24 0l-5 3a9 9 0 0 0-14 0zM27 24a14 14 0 0 1-24 0l5-3a9 9 0 0 0 14 0z" fill="#2aa83a" /><path d="M15 10v12M9 16h12" stroke="#1f8a2e" stroke-width="3.5" /></svg>
			<svg width="22" height="24" viewBox="0 0 22 24"><path d="M2 10a8 8 0 0 1 14-5M3 19a8 8 0 0 0 2 2M13 2l3 3-3 3M2 16l3-2v4" fill="none" stroke="#222" stroke-width="1.2" /><circle cx="16" cy="17" r="5" fill="#f08a1c" /></svg>
			<svg width="16" height="24" viewBox="0 0 16 24"><rect x="5" y="1" width="6" height="14" rx="3" fill="#cfe4f6" stroke="#1f68b8" /><path d="M2 11a6 6 0 0 0 12 0M8 17v5" fill="none" stroke="#1f68b8" stroke-width="1.2" /></svg>
			<span class="ime">中</span>
			<svg width="22" height="18" viewBox="0 0 22 18"><path d="M1 6a14 14 0 0 1 20 0M4 9.5a10 10 0 0 1 14 0M7 13a5.5 5.5 0 0 1 8 0" fill="none" stroke="#222" stroke-width="1.3" /><circle cx="11" cy="16" r="1.4" fill="#222" /></svg>
			<svg width="18" height="16" viewBox="0 0 18 16"><path d="M1 5h3l4-4v14l-4-4H1zM11 5a4 4 0 0 1 0 6M13.5 3a7 7 0 0 1 0 10" fill="none" stroke="#222" stroke-width="1.2" /></svg>
			<svg width="20" height="18" viewBox="0 0 20 18"><path d="M0 4h4M0 9h4M4 1h3v11H4z" stroke="#222" fill="#222" /><rect x="8" y="3" width="11" height="11" rx="2" fill="#222" /></svg>
			<span class="clock">2023</span>
		</div>
	</div>
</div>

<style>
	:global(body) {
		margin: 0;
		background: #f0f1f3;
	}

	.app {
		width: 1728px;
		height: 1080px;
		overflow: hidden;
		display: flex;
		flex-direction: column;
		font-family: "Noto Sans", "Noto Sans CJK SC", sans-serif;
		font-size: 14px;
		color: #333;
		background: #f0f1f3;
	}

	i {
		display: block;
		font-style: normal;
	}

	.ic {
		display: block;
		flex: none;
	}

	/* title + tabs */
	.titlebar {
		height: 33px;
		display: flex;
		position: relative;
		background: #f0f1f3;
	}

	.ctx {
		margin-left: 48px;
		width: 61px;
		background: #cbdcec;
		border-top: 5px solid #2c68ac;
		box-sizing: border-box;
		text-align: center;
		color: #4a80b4;
		line-height: 27px;
	}

	.title {
		flex: 1;
		margin-left: 548px;
		line-height: 36px;
		font-size: 13.4px;
		color: #555;
	}

	.minimize {
		width: 12px;
		height: 3px;
		background: #222;
		margin: 17px 16px 0 0;
	}

	.tabs {
		height: 33px;
		display: flex;
		align-items: center;
		background: #f0f1f3;
		position: relative;
	}

	.tab {
		line-height: 33px;
		color: #444;
		flex: none;
	}

	.tab.cut {
		width: 48px;
		margin-left: -1px;
	}

	.tab.active {
		width: 61px;
		text-align: center;
		height: 34px;
		background: #fafbfb;
		box-shadow: inset 1px 0 #ccc, inset -1px 0 #ccc;
		position: relative;
		z-index: 1;
		color: #222;
		margin-right: 20px;
	}

	.tab.t1 {
		width: 64px;
	}

	.tab.t2 {
		width: 78px;
	}

	.quick {
		margin-left: auto;
		width: 191px;
		height: 25px;
		box-sizing: border-box;
		border: 1px solid #d8d8d8;
		background: #fff;
		line-height: 23px;
		padding-left: 4px;
		font-size: 13px;
		color: #999;
		margin-top: 2px;
	}

	/* ribbon */
	.ribbon {
		height: 110px;
		display: flex;
		background: #fafbfb;
		border-top: 1px solid #ccc;
		border-bottom: 2px solid #dcdde0;
		box-sizing: border-box;
		flex: none;
		overflow: hidden;
	}

	.rgroup {
		flex: none;
		display: flex;
		flex-direction: column;
		box-sizing: border-box;
		padding-top: 6px;
		background: linear-gradient(#d4d4d4, #d4d4d4) right 6px / 1px 92px no-repeat;
	}

	.rbody {
		height: 79px;
		display: flex;
	}

	.rlabel {
		text-align: center;
		line-height: 20px;
		height: 20px;
		color: #444;
		position: relative;
	}

	.launch {
		display: inline-block;
		width: 6px;
		height: 6px;
		border-top: 1px solid #888;
		border-left: 1px solid #888;
		margin-left: 1px;
	}

	.g-solve { width: 66px; }
	.g-insert { width: 409px; }
	.g-show { width: 481px; }
	.g-vector { width: 611px; }
	.g-cap { width: 196px; background: none; }

	.big {
		display: flex;
		flex-direction: column;
		align-items: center;
		flex: none;
		width: 65px;
	}

	.big-ic {
		height: 40px;
		display: flex;
		align-items: center;
		justify-content: center;
	}

	.big span {
		line-height: 18px;
		white-space: nowrap;
	}

	.caret {
		width: 0;
		height: 0;
		border: 4px solid transparent;
		border-top: 5px solid #777;
		border-bottom: 0;
		margin-top: 12px;
		flex: none;
	}

	.caret.tiny {
		border-width: 3px 3px 0;
		border-top-color: #888;
		margin: 0 0 0 3px;
	}

	.caret.dark {
		border-top-color: #333;
		margin-top: 0;
	}

	.no-caret .caret {
		display: none;
	}

	.small {
		display: flex;
		align-items: center;
		gap: 1px;
		white-space: nowrap;
		flex: none;
	}

	.small.off {
		color: #a4a4a4;
	}

	.small.caret-after .caret {
		margin-left: 1px;
	}

	.insert-grid {
		display: grid;
		grid-template-columns: 80px 72px 58px 66px;
		grid-auto-rows: 35px;
		align-items: center;
		margin-left: 0;
	}

	.note {
		padding: 25px 0 0 10px;
	}

	.combos {
		margin-left: 9px;
		width: 174px;
		flex: none;
	}

	.combo {
		height: 25px;
		box-sizing: border-box;
		background: #fff;
		border: 1px solid #dcdcdc;
		line-height: 23px;
		padding-left: 3px;
		position: relative;
		display: flex;
		justify-content: space-between;
		align-items: center;
		padding-right: 6px;
		white-space: nowrap;
		font-size: 13.5px;
	}

	.combo + .combo {
		margin-top: 1px;
	}

	.combo .caret {
		margin: 0;
		border-width: 3px 3px 0;
	}

	.check-row {
		display: flex;
		align-items: center;
		gap: 8px;
		padding: 0 0 0 4px;
		height: 24px;
	}

	.cb {
		display: block;
		width: 15px;
		height: 15px;
		box-sizing: border-box;
		border: 1px solid #ccc;
		background: #fff;
		position: relative;
		flex: none;
	}

	.cb.on::after {
		content: "";
		position: absolute;
		left: 4px;
		top: 0;
		width: 4px;
		height: 9px;
		border: solid #555;
		border-width: 0 1.5px 1.5px 0;
		transform: rotate(40deg);
	}

	.b56 {
		width: 56px;
		flex: none;
		margin-left: 1px;
	}

	.combos + .b56 {
		margin-left: 3px;
	}

	.b46 {
		width: 46px;
		flex: none;
	}

	.b56 .big,
	.b46 .big {
		width: 100%;
	}

	.probe-grid {
		display: grid;
		grid-template-columns: 57px 60px;
		grid-auto-rows: 28px;
		align-items: center;
		align-content: start;
		margin-left: 8px;
		padding: 0 0 0 7px;
		height: 78px;
		border-left: 1px solid #d4d4d4;
		box-sizing: border-box;
		margin-top: -1px;
	}

	.probe-grid .small {
		margin-top: -4px;
	}

	.align-t {
		margin-left: 7px;
	}

	.probe-grid .cb {
		width: 16px;
		height: 20px;
	}

	.vec-big .big {
		width: 68px;
	}

	.vec-big .big-ic {
		height: 37px;
		padding-top: 3px;
		box-sizing: border-box;
	}

	.two-rows {
		display: grid;
		grid-auto-rows: 28px;
		align-items: center;
		align-content: start;
	}

	.two-rows > *,
	.vec-axes > * {
		margin-top: -5px;
	}

	.sub {
		border-right: 1px solid #d4d4d4;
		height: 78px;
		flex: none;
	}

	.w-scale {
		width: 53px;
	}

	.w-align {
		width: 216px;
		padding-left: 8px;
		box-sizing: border-box;
	}

	.row-slide {
		display: flex;
		align-items: center;
		gap: 15px;
	}

	.slider {
		width: 105px;
		height: 3px;
		background: #8a8a8a;
		position: relative;
		flex: none;
	}

	.slider i {
		position: absolute;
		top: -4px;
		width: 3px;
		height: 11px;
		background: #6a6a6a;
		border-left: 1px solid #6a6a6a;
		border-bottom: 2px solid #6a6a6a;
	}

	.s1 {
		margin-top: -6px;
	}

	.s1 i { left: 19px; }
	.s2 i { left: 48px; }
	.s3 i { left: 0; }

	.w-line {
		width: 137px;
		padding-left: 12px;
		box-sizing: border-box;
		flex: none;
	}

	.two-rows > .s2 {
		margin-top: -9px;
	}

	.vec-axes {
		display: grid;
		grid-template-columns: 82px 50px;
		grid-auto-rows: 28px;
		align-items: center;
		align-content: start;
	}

	.cap-body {
		display: block;
		padding-left: 13px;
		margin-top: -3px;
	}

	.cap-row {
		display: flex;
		height: 28px;
		align-items: center;
		gap: 8px;
	}

	.cap-input {
		width: 100px;
		height: 25px;
		background: #ededed;
		line-height: 25px;
		padding-left: 3px;
		margin-left: -3px;
		color: #999;
		font-size: 13px;
		border: 1px solid #e2e2e2;
		box-sizing: border-box;
	}

	.s3 {
		margin: 9px 0 0 64px;
	}

	/* toolbar row */
	.toolrow {
		height: 34px;
		display: flex;
		flex: none;
		padding-top: 2px;
		box-sizing: border-box;
		background: #f0f1f3;
	}

	.pane-head {
		display: flex;
		align-items: center;
		box-sizing: border-box;
		flex: none;
	}

	.pane-head.top {
		width: 195px;
		height: 28px;
		padding-right: 15px;
	}

	.dots {
		flex: 1;
		height: 9px;
		margin: 0 8px 0 3px;
		background-image: radial-gradient(#d0d0d0 1px, transparent 1.2px);
		background-size: 3px 3px;
	}

	.pane-btns {
		display: flex;
		align-items: center;
		gap: 10px;
	}

	.pane-btns .box {
		width: 11px;
		height: 11px;
		border: 1.5px solid #444;
		box-sizing: border-box;
		display: block;
		border-top-width: 2px;
	}

	.toolbar {
		display: flex;
		align-items: center;
		flex: 1;
		height: 30px;
	}

	.grip {
		width: 5px;
		height: 24px;
		margin-left: 12px;
		margin-right: 3px;
		background: radial-gradient(circle, #aaa 0.8px, transparent 1px) 0 0 / 4px 4px;
		flex: none;
	}

	.tb {
		width: 27.6px;
		height: 28px;
		display: flex;
		align-items: center;
		justify-content: center;
		flex: none;
		box-sizing: border-box;
	}

	.boxed {
		background: #e9f2fb;
		border: 1.5px solid #7fb0df;
	}

	.tb.wide {
		width: 41px;
	}

	.vsep {
		width: 8px;
		height: 24px;
		flex: none;
		background: linear-gradient(#d4d4d4, #d4d4d4) center / 1px 100% no-repeat;
	}

	.vsep.thin {
		width: 6px;
	}

	.sel-icons {
		display: flex;
		flex: none;
	}

	.tb-t {
		display: flex;
		align-items: center;
		gap: 2px;
		flex: none;
		white-space: nowrap;
		color: #333;
	}

	.empty {
		margin-left: 19px;
		width: 33px;
	}

	.ml2 { margin-left: 2px; }
	.ml6 { margin-left: 6px; }
	.ml7 { margin-left: 7px; }
	.ml8 { margin-left: 8px; }
	.ml10 { margin-left: 10px; }
	.ml12 { margin-left: 12px; }
	.ml13 { margin-left: 13px; }
	.ml14 { margin-left: 14px; }
	.w30 { width: 30px; }
	.w60 { width: 60px; }
	.w62 { width: 62px; }
	.w75 { width: 75px; }
	.w93 { width: 93px; }

	/* main area */
	.main {
		flex: 1;
		display: flex;
		min-height: 0;
	}

	.left {
		width: 195px;
		flex: none;
		display: flex;
		flex-direction: column;
	}

	.searchrow {
		height: 27px;
		display: flex;
		flex: none;
	}

	.fake-combo {
		width: 55px;
		background: #fff;
		border: 1px solid #dcdcdc;
		border-left: 0;
		box-sizing: border-box;
		display: flex;
		justify-content: flex-end;
		align-items: center;
		padding-right: 6px;
	}

	.search {
		width: 111px;
		margin-left: 2px;
		background: #fff;
		border: 1px solid #dcdcdc;
		box-sizing: border-box;
		line-height: 25px;
		padding-left: 3px;
		color: #b4b4b4;
	}

	.chev {
		margin-left: 7px;
	}

	.tree-wrap {
		height: 405px;
		display: flex;
		flex: none;
	}

	.tree {
		width: 170px;
		background: #fff;
		padding-top: 2px;
		box-sizing: border-box;
		overflow: hidden;
		flex: none;
	}

	.node {
		height: 20px;
		display: flex;
		align-items: center;
		position: relative;
		white-space: nowrap;
		font-size: 14.8px;
		color: #222;
	}

	.node.bold {
		font-weight: 700;
	}

	.node.l0 {
		padding-left: 8px;
		font-size: 14.5px;
	}

	.node.l1 { padding-left: 3px; }
	.node.l2 { padding-left: 37px; }
	.node.l3 { padding-left: 72px; }

	.tick {
		flex: none;
		margin-top: 4px;
	}

	.node-ic {
		width: 18px;
		flex: none;
		margin-top: -3px;
		margin-right: 6px;
	}

	.node-t.sel {
		background: #eef0f2;
		padding: 0 2px;
		margin-left: -2px;
	}

	.twig {
		position: absolute;
		left: 20px;
		top: -8px;
		width: 17px;
		height: 18px;
		border-left: 1px dotted #777;
		border-bottom: 1px dotted #777;
	}

	.l3 .twig {
		left: 54px;
	}

	.minus {
		position: absolute;
		left: 15px;
		top: 5px;
		width: 10px;
		height: 10px;
		box-sizing: border-box;
		border: 1px solid #666;
		background: linear-gradient(#666, #666) center / 6px 1px no-repeat #fff;
		z-index: 1;
	}

	.vscroll {
		width: 2px;
		background: #9a9a9a;
		flex: none;
	}

	.tree-scroll {
		height: 300px;
		margin: 83px 0 0 10px;
	}

	.hscroll {
		width: 48px;
		height: 2px;
		background: #a8a8a8;
		margin-top: 10px;
		flex: none;
	}

	.details-head {
		margin-top: 13px;
		height: 29px;
		padding-right: 15px;
		flex: none;
	}

	.head-t {
		color: #555;
		white-space: nowrap;
	}

	.details-wrap {
		display: flex;
		flex: 1;
		min-height: 0;
		overflow: hidden;
	}

	.details {
		width: 168px;
		background: #fff;
		flex: none;
		border-top: 1px solid #ccc;
		border-right: 1px solid #ccc;
		box-sizing: border-box;
	}

	.d-row {
		height: 26.2px;
		display: flex;
		box-sizing: border-box;
		border-bottom: 1px solid #cfcfcf;
		white-space: nowrap;
		line-height: 25px;
	}

	.d-k {
		width: 14px;
		box-sizing: border-box;
		direction: rtl;
		overflow: hidden;
		padding-right: 4px;
		border-right: 1px solid #cfcfcf;
		flex: none;
	}

	.d-v {
		flex: 1;
		padding-left: 4px;
	}

	.d-v.fill {
		background: #e8e8e2;
	}

	.details-scroll {
		height: 125px;
		margin: 18px 0 0 12px;
	}

	.work {
		flex: 1;
		min-width: 0;
		display: flex;
		flex-direction: column;
	}

	.viewport {
		height: 548px;
		margin-top: 2px;
		flex: none;
		position: relative;
		overflow: hidden;
		background: linear-gradient(#6088da 0%, #8eaae6 30%, #bccfef 62%, #e6eef9 90%, #f2f6fc 100%);
	}

	.annot {
		position: absolute;
		left: 21px;
		top: 20px;
		display: flex;
		flex-direction: column;
		font-family: "DejaVu Sans", "Noto Sans CJK SC", sans-serif;
		font-size: 11.8px;
		line-height: 20.2px;
		color: #1c2230;
		white-space: nowrap;
	}

	.annot b {
		font-size: 12.5px;
	}

	.legend {
		position: absolute;
		left: 21px;
		top: 169px;
		display: flex;
		gap: 10px;
		font-family: "DejaVu Sans", "Noto Sans CJK SC", sans-serif;
		font-size: 12px;
		color: #1c2230;
	}

	.legend-bar {
		width: 20px;
		height: 203px;
		border: 1px solid #061040;
		box-sizing: border-box;
		display: flex;
		flex-direction: column;
		border-radius: 2px;
		overflow: hidden;
	}

	.legend-bar i {
		flex: 1;
		border-bottom: 1px solid #20281c;
	}

	.legend-vals {
		display: flex;
		flex-direction: column;
		line-height: 22.1px;
		margin-top: -9px;
		white-space: nowrap;
	}

	.mesh {
		position: absolute;
		left: 185px;
		top: 166px;
	}

	.watermark {
		position: absolute;
		left: 563px;
		top: 292px;
		font-family: "Noto Sans CJK SC", sans-serif;
		font-weight: 300;
		font-size: 43px;
		line-height: 60px;
		color: #e01e1e;
		white-space: nowrap;
	}

	.logo {
		position: absolute;
		left: 1478px;
		top: 18px;
		font-family: Inter, sans-serif;
		font-weight: 800;
		font-size: 46px;
		line-height: 58px;
		color: #fbfcff;
		white-space: nowrap;
	}

	.triad {
		position: absolute;
		left: 1479px;
		top: 328px;
	}

	.scale {
		position: absolute;
		left: 592px;
		top: 479px;
		width: 444px;
		font-family: "Noto Sans", sans-serif;
		font-size: 12.5px;
		color: #222;
	}

	.scale-top {
		display: flex;
		height: 20px;
		line-height: 18px;
	}

	.scale-top span {
		flex: none;
		width: 222px;
		margin-left: -14px;
		margin-right: 14px;
	}

	.scale-top span:last-child {
		white-space: nowrap;
		width: 100px;
		margin-left: -17px;
	}

	.scale-bar {
		height: 11px;
		display: flex;
		border: 1px solid #000;
		box-sizing: border-box;
		background: #fff;
	}

	.scale-bar i {
		flex: 1;
	}

	.scale-bar i:nth-child(odd) {
		background: #000;
	}

	.scale-low {
		display: flex;
		padding-left: 94px;
		line-height: 20px;
	}

	.scale-low span {
		flex: none;
		width: 222px;
	}

	.lower {
		flex: 1;
		min-height: 0;
		display: flex;
		margin-top: 5px;
	}

	.graph {
		width: 815px;
		flex: none;
		position: relative;
		display: flex;
		flex-direction: column;
		border-right: 1px solid #e4e4e4;
		box-sizing: content-box;
	}

	.graph-head {
		height: 28px;
		padding: 0 14px 0 7px;
		background: #eff0f2;
		border-top: 1px solid #d8d8d8;
	}

	.anim-bar {
		height: 32px;
		display: flex;
		align-items: center;
		background: #f0f1f3;
		flex: none;
	}

	.anim-bar .grip {
		margin-left: 14px;
		margin-right: 14px;
	}

	.anim-t {
		width: 37px;
		flex: none;
	}

	.small-tb {
		width: 22px;
	}

	.m-play { margin-left: 5.5px; }
	.m-skip { margin-left: 3px; }
	.m-bar { margin-left: 2px; }

	.stop-b {
		width: 28px;
		height: 30px;
		margin-left: 4px;
		background: #b9d8f3;
	}

	.bar-b {
		width: 28px;
		height: 30px;
		margin-left: 10px;
	}

	.a-combo {
		height: 28px;
		width: 124px;
		background: #fff;
		border: 1px solid #e0e0e0;
		box-sizing: border-box;
		display: flex;
		align-items: center;
		justify-content: space-between;
		padding: 0 6px 0 4px;
		white-space: nowrap;
		flex: none;
	}

	.c20 {
		margin-left: 11px;
	}

	.m1 { margin-left: 9px; }
	.m2 { margin-left: 6.4px; }
	.m4 { margin-left: 6px; }

	.cycles {
		width: 73px;
		height: 28px;
		box-sizing: border-box;
		border: 1px solid #d8d8d8;
		background: #e9eaea;
		color: #a8a8a8;
		line-height: 26px;
		padding-left: 3px;
		flex: none;
		margin-left: 3px;
		white-space: nowrap;
	}

	.chev2 {
		margin-left: 5px;
	}

	.cursor {
		position: absolute;
		left: 137px;
		top: 44px;
		z-index: 2;
	}

	.chart {
		flex: 1;
		background: #fff;
		position: relative;
		min-height: 0;
		overflow: hidden;
	}

	.chart svg {
		display: block;
	}

	.cfont {
		font-family: "Noto Sans", sans-serif;
	}

	.time-slider {
		position: absolute;
		left: 98px;
		top: 133px;
		width: 684px;
		height: 18px;
		box-sizing: border-box;
		border: 1px solid #a8a8a8;
		background: #efefef;
		text-align: center;
		font-size: 11px;
		line-height: 16px;
	}

	.tabular {
		flex: 1;
		min-width: 0;
		display: flex;
		flex-direction: column;
		background: #fff;
	}

	.table-head {
		height: 28px;
		padding-left: 7px;
		background: #eff0f2;
		border-top: 1px solid #d8d8d8;
	}

	.table-area {
		flex: 1;
		min-height: 0;
		background: #a0a0a0;
		margin-left: 2px;
		overflow: hidden;
	}

	.grid {
		display: grid;
		width: 417px;
		grid-template-columns: 25px 89px 101px 101px 101px;
		grid-template-rows: 23px;
		grid-auto-rows: 22.5px;
		background: #e8e8e3;
		font-size: 14px;
		white-space: nowrap;
	}

	.th {
		display: flex;
		align-items: center;
		gap: 6px;
		padding-left: 4px;
		background: #f2f2ee;
		border-right: 1px solid #b4b4b0;
		border-bottom: 1px solid #8a8a88;
		box-sizing: border-box;
		font-size: 13.5px;
	}

	.corner {
		background: #e8e8e3;
	}

	.hcb {
		width: 15px;
		height: 15px;
		background: #fff;
		border: 1px solid #666;
		border-right-color: #ccc;
		border-bottom-color: #ccc;
		box-sizing: border-box;
		position: relative;
		flex: none;
	}

	.hcb::after {
		content: "";
		position: absolute;
		left: 4px;
		top: 0;
		width: 4px;
		height: 9px;
		border: solid #000;
		border-width: 0 2px 2px 0;
		transform: rotate(40deg);
	}

	.red { color: #d9352a; }
	.green { color: #239a34; }
	.blue { color: #2a3ab4; }

	.rn {
		background: #fff;
		border-right: 1px solid #8a8a88;
		border-bottom: 1px solid #8a8a88;
		box-sizing: border-box;
		padding-left: 2px;
		line-height: 21px;
	}

	.td {
		border-right: 2px solid #fafaf8;
		border-bottom: 2px solid #cfcfca;
		box-sizing: border-box;
		padding-left: 4px;
		line-height: 20px;
	}

	/* status + taskbar */
	.status {
		height: 27px;
		flex: none;
		background: #0a6fc8;
		color: #fff;
		display: flex;
		align-items: center;
		white-space: nowrap;
		padding-left: 1190px;
		overflow: hidden;
	}

	.st-msg { margin-left: 2px; width: 44px; font-size: 15px; flex: none; }
	.st-sel { margin-left: 22px; width: 46px; flex: none; }
	.st-up { margin-left: 25px; width: 19px; flex: none; font-size: 11px; }
	.st-unit { width: 271px; flex: none; font-size: 15.4px; }
	.st-rad { margin-left: 28px; width: 31px; flex: none; }
	.st-rl { margin-left: 20px; }

	.taskbar {
		height: 60px;
		flex: none;
		display: flex;
		align-items: center;
		padding-left: 536px;
		background: linear-gradient(90deg, #c4e8de 0%, #cdeae4 28%, #e6efe2 36%, #d7ecec 46%, #c8e6e8 62%, #c2e6e2 78%, #dfe9dc 88%, #f0e6e0 100%);
	}

	.win {
		flex: none;
	}

	.pill {
		width: 123px;
		height: 38px;
		margin-left: 17px;
		margin-right: 4.5px;
		border-radius: 19px;
		background: #f2f6f4;
		display: flex;
		align-items: center;
		justify-content: center;
		gap: 4px;
		font-size: 14.5px;
		color: #222;
		flex: none;
	}

	.slot {
		width: 55.3px;
		height: 48px;
		display: flex;
		align-items: center;
		justify-content: center;
		flex: none;
		position: relative;
		border-radius: 5px;
		box-sizing: border-box;
	}

	.dot::after,
	.active-app::after {
		content: "";
		position: absolute;
		bottom: -3px;
		left: 50%;
		width: 7px;
		height: 3px;
		margin-left: -3.5px;
		border-radius: 2px;
		background: #707a80;
	}

	.active-app {
		background: rgba(255, 255, 255, 0.6);
		width: 49px;
		margin-left: 3px;
	}

	.active-app::after {
		width: 19px;
		margin-left: -9.5px;
		bottom: 1px;
		background: #0f6cbd;
	}

	.tray {
		margin-left: 216px;
		display: grid;
		grid-template-columns: 31px 30px 33px 37px 41px 28px 31px 31px auto;
		justify-items: center;
		align-items: center;
		flex: none;
	}

	.ime {
		font-size: 17px;
		color: #222;
	}

	.clock {
		font-size: 14px;
		color: #222;
		margin-top: 20px;
		justify-self: start;
		margin-left: 14px;
	}
</style>
